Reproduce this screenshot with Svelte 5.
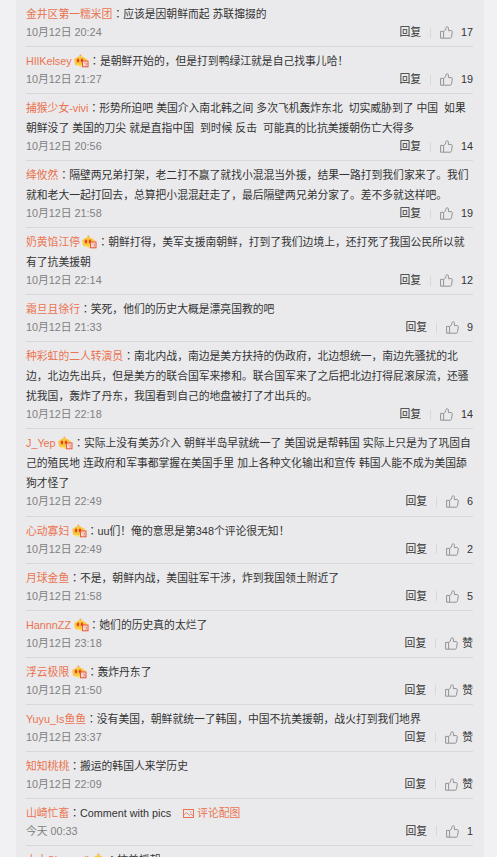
<script lang="ts">
  type Comment = {
    name: string;
    vip?: boolean;
    lines: string[];
    time: string;
    likes?: number;
    pic?: boolean;
  };

  const comments: Comment[] = [
    { name: "金井区第一糯米团", lines: ["应该是因朝鲜而起 苏联撺掇的"], time: "10月12日 20:24", likes: 17 },
    { name: "HIlKelsey", vip: true, lines: ["是朝鲜开始的，但是打到鸭绿江就是自己找事儿哈！"], time: "10月12日 21:27", likes: 19 },
    {
      name: "捕猴少女-vivi",
      lines: [
        "形势所迫吧 美国介入南北韩之间 多次飞机轰炸东北  切实威胁到了 中国  如果",
        "朝鲜没了 美国的刀尖 就是直指中国  到时候 反击  可能真的比抗美援朝伤亡大得多",
      ],
      time: "10月12日 20:56",
      likes: 14,
    },
    {
      name: "绛攸然",
      lines: [
        "隔壁两兄弟打架，老二打不赢了就找小混混当外援，结果一路打到我们家来了。我们",
        "就和老大一起打回去，总算把小混混赶走了，最后隔壁两兄弟分家了。差不多就这样吧。",
      ],
      time: "10月12日 21:58",
      likes: 19,
    },
    {
      name: "奶黄馅江停",
      vip: true,
      lines: ["朝鲜打得，美军支援南朝鲜，打到了我们边境上，还打死了我国公民所以就", "有了抗美援朝"],
      time: "10月12日 22:14",
      likes: 12,
    },
    { name: "霜旦且徐行", lines: ["笑死，他们的历史大概是漂亮国教的吧"], time: "10月12日 21:33", likes: 9 },
    {
      name: "种彩虹的二人转演员",
      lines: [
        "南北内战，南边是美方扶持的伪政府，北边想统一，南边先骚扰的北",
        "边，北边先出兵，但是美方的联合国军来掺和。联合国军来了之后把北边打得屁滚尿流，还骚",
        "扰我国，轰炸了丹东，我国看到自己的地盘被打了才出兵的。",
      ],
      time: "10月12日 22:18",
      likes: 14,
    },
    {
      name: "J_Yep",
      vip: true,
      lines: [
        "实际上没有美苏介入 朝鲜半岛早就统一了 美国说是帮韩国 实际上只是为了巩固自",
        "己的殖民地 连政府和军事都掌握在美国手里 加上各种文化输出和宣传 韩国人能不成为美国舔",
        "狗才怪了",
      ],
      time: "10月12日 22:49",
      likes: 6,
    },
    { name: "心动寡妇", vip: true, lines: ["uu们！俺的意思是第348个评论很无知！"], time: "10月12日 22:49", likes: 2 },
    { name: "月球金鱼", lines: ["不是，朝鲜内战，美国驻军干涉，炸到我国领土附近了"], time: "10月12日 21:58", likes: 5 },
    { name: "HannnZZ", vip: true, lines: ["她们的历史真的太烂了"], time: "10月12日 23:18" },
    { name: "浮云极限", vip: true, lines: ["轰炸丹东了"], time: "10月12日 21:50" },
    { name: "Yuyu_Is鱼鱼", lines: ["没有美国，朝鲜就统一了韩国，中国不抗美援朝，战火打到我们地界"], time: "10月12日 23:37" },
    { name: "知知桃桃", lines: ["搬运的韩国人来学历史"], time: "10月12日 22:09" },
    { name: "山崎忙畜", lines: ["Comment with pics"], time: "今天 00:33", likes: 1, pic: true },
    { name: "大大Shancell", vip: true, lines: ["抗美援朝"], time: "今天 00:41", likes: 1 },
  ];
</script>

<main class="panel">
  {#each comments as item}
    <article class="comment">
      <div class="text">
        <a class="name" href="#user">{item.name}</a>{#if item.vip}<svg class="vip" viewBox="0 0 15 14">
            <circle cx="6.4" cy="1.5" r="1" fill="#f0a94a" />
            <path d="M.2 5Q2 4.4 3.3 3Q6.4 1.4 9.5 3Q10.8 4.4 12.8 5L12.2 10.6Q6.5 14.2 1 10.6Z" fill="#fcc63c" />
            <path d="M3 9.7Q6.5 12.5 9.4 9.8L9 11.7Q6.5 12.8 3.5 11.7Z" fill="#ffe36b" />
            <ellipse cx="4" cy="6.6" rx="1.3" ry="2" fill="#df4a22" />
            <ellipse cx="8" cy="6.6" rx="1.3" ry="2" fill="#df4a22" />
            <rect x="8.6" y="7" width="5.4" height="5.8" fill="#fbe9e4" stroke="#e65036" />
            <path d="M10 9h2.5v2.2h-1.6" fill="none" stroke="#e98472" stroke-width=".8" />
          </svg>{/if}<span class="colon">：</span>{#each item.lines as line, i}{#if i > 0}<br />{/if}{line}{/each}{#if item.pic}<a class="pic" href="#pic"
            ><svg viewBox="0 0 11 9" fill="none" stroke="currentColor"
              ><rect x=".5" y=".5" width="10" height="8" /><path d="M1 5.8l2.5-2.2 3 2.7 1.4-1.2L10 6.7M7 3h1.5" stroke-width=".8" /></svg
            >评论配图</a
          >{/if}
      </div>
      <div class="foot">
        <span class="time">{item.time}</span>
        <div class="actions">
          <a class="reply" href="#reply">回复</a>
          <span class="bar"></span>
          <svg class="thumb" viewBox="0 0 13 13" fill="none" stroke="#929292">
            <path d="M.6 5.4h3v6.8h-3z" />
            <path d="M3.6 5.7C5 4.7 5.8 3.4 6 1.7C6.1.5 8.3.3 8.4 2.1V4.6h2.7c1 0 1.3.6 1.2 1.4l-.8 4.8c-.2 1-.6 1.4-1.5 1.4H3.6" />
          </svg>
          {#if item.likes}
            <span class="count">{item.likes}</span>
          {:else}
            <span class="zan">赞</span>
          {/if}
        </div>
      </div>
    </article>
  {/each}
</main>

<style>
  :global(body) {
    background: #f1f1f4;
    overflow: hidden;
  }
  .panel {
    box-sizing: border-box;
    width: 468px;
    height: 857px;
    margin-left: 16px;
    padding: 0 11px 0 10px;
    overflow: hidden;
    background: #eaeaec;
    color: #333;
    font-family: "Liberation Sans", "Noto Sans CJK SC", sans-serif;
    font-size: 10.8px;
  }
  .comment {
    box-sizing: border-box;
    padding: 4px 0 5px;
    border-bottom: 1px solid #d8d8da;
  }
  .text {
    line-height: 20px;
    white-space: pre;
  }
  .name,
  .pic {
    color: #eb7350;
    text-decoration: none;
  }
  .colon {
    font-family: "Noto Sans CJK JP", sans-serif;
    line-height: 1;
  }
  .vip {
    width: 15px;
    height: 14px;
    margin-left: 2.5px;
    vertical-align: -3px;
  }
  .pic {
    margin-left: 12px;
  }
  .pic svg {
    width: 11px;
    height: 9px;
    margin-right: 3px;
    vertical-align: -1px;
  }
  .foot {
    display: flex;
    justify-content: space-between;
    align-items: center;
    height: 17.07px;
    line-height: 17px;
  }
  .time {
    color: #808080;
  }
  .actions {
    display: flex;
    align-items: center;
  }
  .reply {
    color: #333;
    text-decoration: none;
  }
  .bar {
    width: 1px;
    height: 10px;
    margin: 0 9px;
    background: #d8d8da;
  }
  .thumb {
    width: 13px;
    height: 13px;
  }
  .count {
    margin-left: 8px;
  }
  .zan {
    margin-left: 4px;
  }
</style>
